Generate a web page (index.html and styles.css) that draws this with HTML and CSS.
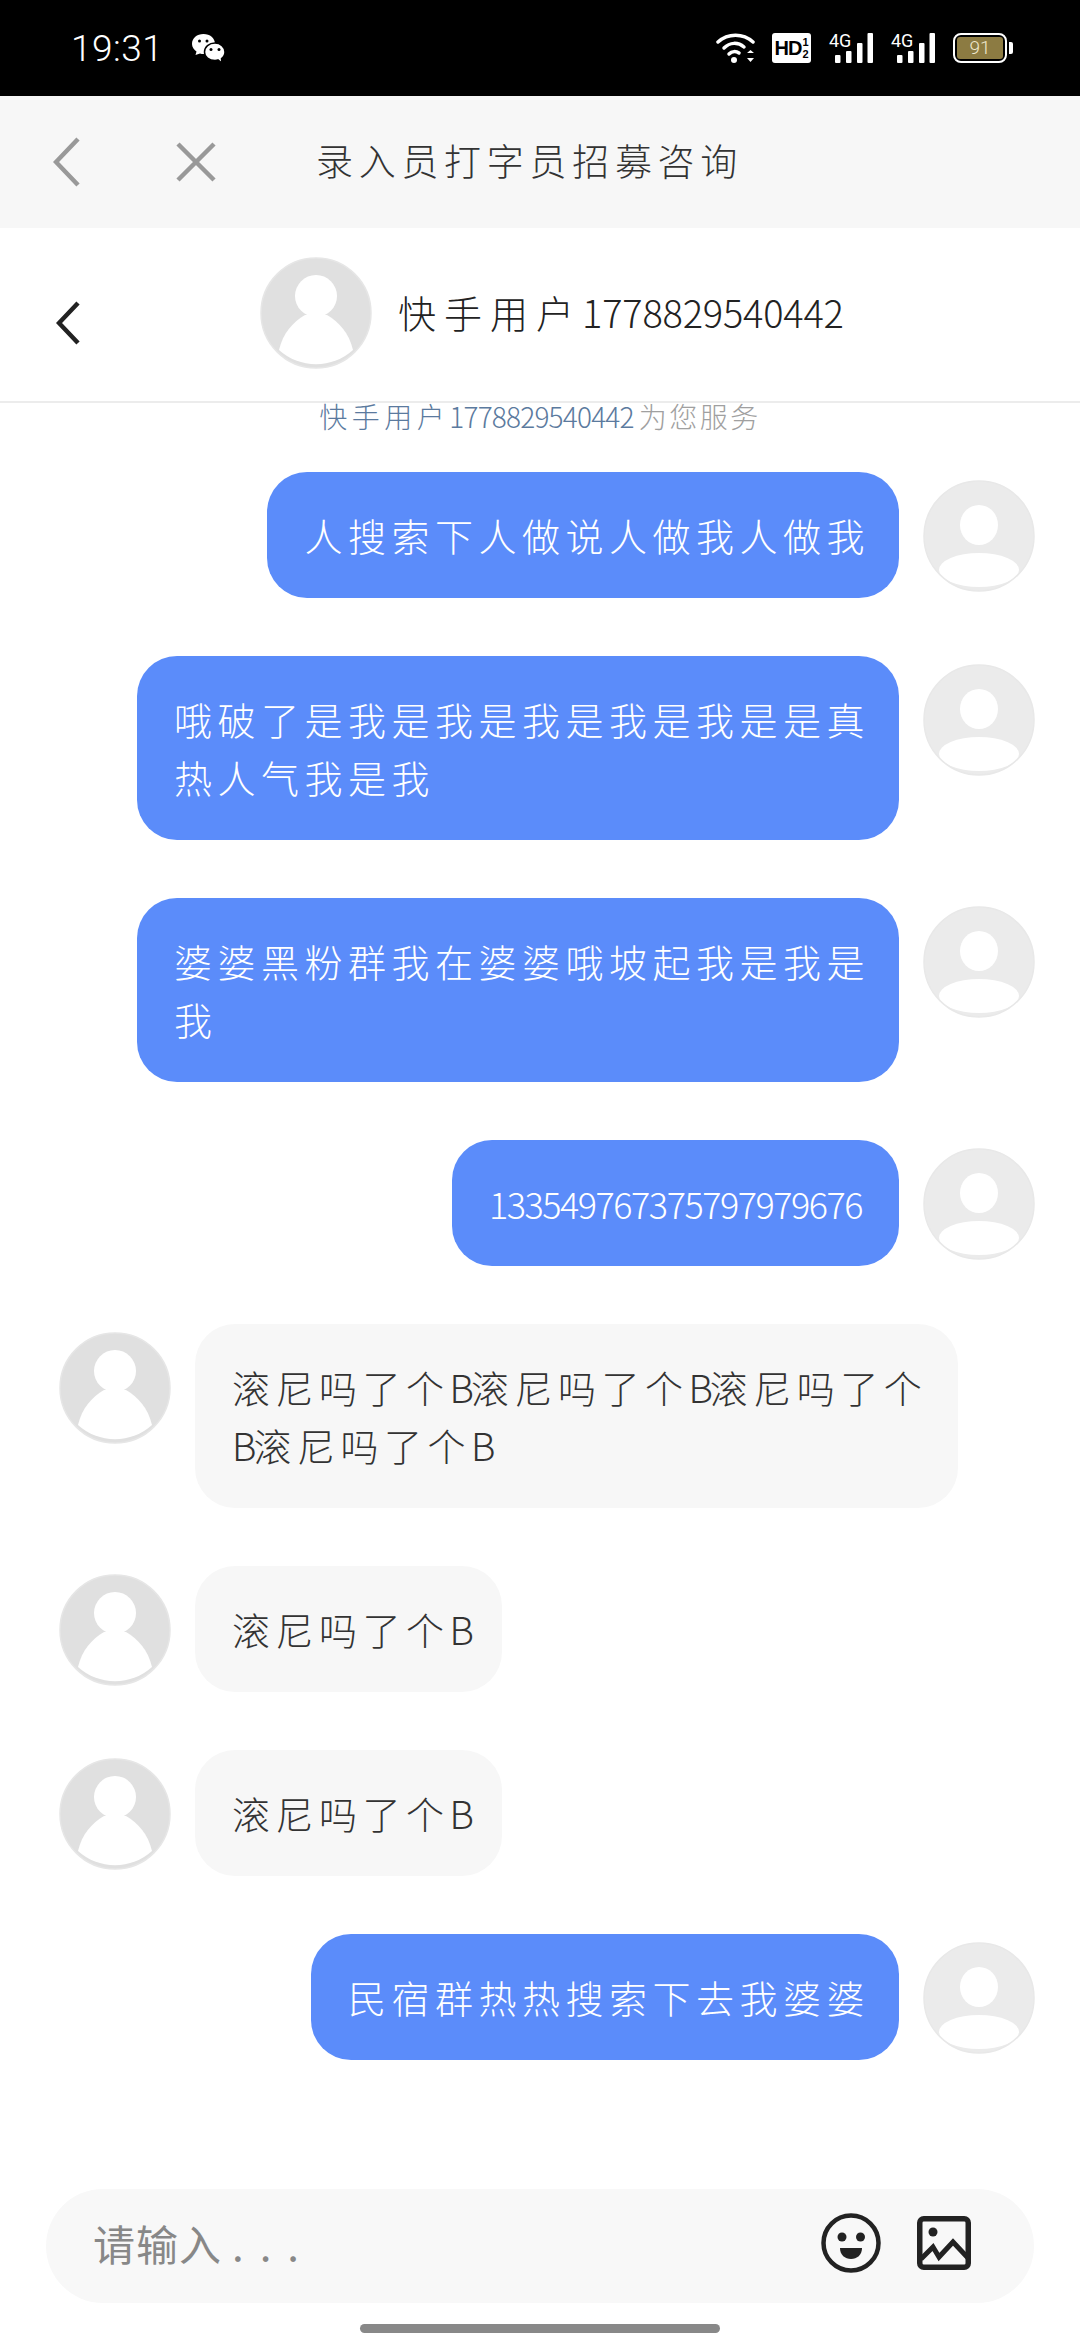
FILE: index.html
```html
<!DOCTYPE html>
<html>
<head>
  <title>录入员打字员招募咨询</title>
  <link rel="stylesheet" href="styles.css">
</head>
<body>
  <svg class="defs">
    <symbol id="avatarLeft" viewBox="0 0 112 112">
      <circle cx="56" cy="56" r="55" fill="#e0e0e0"/>
      <circle cx="56" cy="39" r="21" fill="#fff"/>
      <path d="M19 93C23 76 33 65 45 58L67 58C79 65 89 76 93 93A55 55 0 0 1 19 93Z" fill="#fff"/>
      <circle cx="56" cy="56" r="55" fill="none" stroke="#e6e6e6" stroke-width="1.5"/>
    </symbol>
    <symbol id="avatarRight" viewBox="0 0 112 112">
      <circle cx="56" cy="56" r="55" fill="#ebebeb"/>
      <ellipse cx="56" cy="45" rx="19" ry="20" fill="#fff"/>
      <ellipse cx="56" cy="90" rx="40" ry="17" fill="#fff"/>
      <circle cx="56" cy="56" r="55" fill="none" stroke="#e8e8e8" stroke-width="1.5"/>
    </symbol>
    <symbol id="signal" viewBox="0 0 44 30">
      <rect x="6" y="22" width="5.500" height="8" rx="1" fill="#fff"/>
      <rect x="17" y="18" width="5.500" height="12" rx="1" fill="#fff"/>
      <rect x="28" y="10" width="5.500" height="20" rx="1" fill="#fff"/>
      <rect x="38.500" y="0" width="5.500" height="30" rx="1" fill="#fff"/>
    </symbol>
  </svg>

  <div class="status-bar">
    <span class="time">19:31</span>
    <svg class="wechat" viewBox="0 0 33 29">
      <path d="M11.500 0C5 0 0 4 0 10C0 13 2 16 4.500 17.500L3.500 21L8 19.500C9 20 10.500 20 11.500 20C18 20 23 15 23 10C23 4 18 0 11.500 0Z" fill="#fff"/>
      <path d="M23 9C17 9 12.500 13 12.500 18C12.500 23 17 26.500 23 26.500C24 26.500 25 26.500 26 26L30 29L29.500 24.500C31.500 23 33 20.500 33 18C33 13 28.500 9 23 9Z" fill="#fff" stroke="#000" stroke-width="1.5"/>
      <circle cx="7.500" cy="7" r="1.500" fill="#000"/>
      <circle cx="15" cy="7" r="1.500" fill="#000"/>
      <circle cx="19" cy="15.500" r="1.500" fill="#000"/>
      <circle cx="27" cy="15.500" r="1.500" fill="#000"/>
    </svg>
    <div class="status-right">
      <svg class="wifi" viewBox="0 0 39 30">
        <path d="M2 9C12 0 27 0 37 9" fill="none" stroke="#fff" stroke-width="3.500" stroke-linecap="round"/>
        <path d="M8 15C14 9 22 9 28 14" fill="none" stroke="#fff" stroke-width="3.500" stroke-linecap="round"/>
        <path d="M13 21C16 18 20 18 23 20" fill="none" stroke="#fff" stroke-width="3.500" stroke-linecap="round"/>
        <circle cx="18" cy="27" r="3" fill="#fff"/>
        <path d="M31 20L34.500 17L38 20ZM31 25L34.500 29L38 25Z" fill="#fff"/>
      </svg>
      <div class="hd"><span class="hd-main">HD</span><span class="hd-frac">1<br>2</span></div>
      <div class="net"><span class="net-label">4G</span><svg class="net-bars"><use href="#signal"/></svg></div>
      <div class="net"><span class="net-label">4G</span><svg class="net-bars"><use href="#signal"/></svg></div>
      <div class="battery"><div class="battery-body"><span class="battery-fill">91</span></div><div class="battery-tip"></div></div>
    </div>
  </div>

  <div class="nav-bar">
    <svg class="nav-back" viewBox="0 0 27 50"><path d="M25 2L3 25L25 48" fill="none" stroke="#999" stroke-width="4.500"/></svg>
    <svg class="nav-close" viewBox="0 0 40 40"><path d="M2 2L38 38M38 2L2 38" fill="none" stroke="#999" stroke-width="4.500"/></svg>
    <div class="nav-title">录入员打字员招募咨询</div>
  </div>

  <div class="chat-header">
    <svg class="chat-back" viewBox="0 0 24 44"><path d="M22 2L3 22L22 42" fill="none" stroke="#222" stroke-width="4.500"/></svg>
    <svg class="avatar"><use href="#avatarLeft"/></svg>
    <div class="chat-name"><span class="han">快手用户</span>1778829540442</div>
  </div>

  <div class="service-note"><span class="note-name"><span class="han">快手用户</span>1778829540442</span><span class="note-rest">为您服务</span></div>

  <div class="messages">
    <div class="row row-me">
      <div class="bubble bubble-me">人搜索下人做说人做我人做我</div>
      <svg class="avatar"><use href="#avatarRight"/></svg>
    </div>
    <div class="row row-me">
      <div class="bubble bubble-me">哦破了是我是我是我是我是我是是真<br>热人气我是我</div>
      <svg class="avatar"><use href="#avatarRight"/></svg>
    </div>
    <div class="row row-me">
      <div class="bubble bubble-me">婆婆黑粉群我在婆婆哦坡起我是我是<br>我</div>
      <svg class="avatar"><use href="#avatarRight"/></svg>
    </div>
    <div class="row row-me">
      <div class="bubble bubble-me bubble-num">133549767375797979676</div>
      <svg class="avatar"><use href="#avatarRight"/></svg>
    </div>
    <div class="row">
      <svg class="avatar"><use href="#avatarLeft"/></svg>
      <div class="bubble bubble-other">滚尼吗了个<span class="lat">B</span>滚尼吗了个<span class="lat">B</span>滚尼吗了个<br><span class="lat">B</span>滚尼吗了个<span class="lat">B</span></div>
    </div>
    <div class="row">
      <svg class="avatar"><use href="#avatarLeft"/></svg>
      <div class="bubble bubble-other">滚尼吗了个<span class="lat">B</span></div>
    </div>
    <div class="row">
      <svg class="avatar"><use href="#avatarLeft"/></svg>
      <div class="bubble bubble-other">滚尼吗了个<span class="lat">B</span></div>
    </div>
    <div class="row row-me">
      <div class="bubble bubble-me">民宿群热热搜索下去我婆婆</div>
      <svg class="avatar"><use href="#avatarRight"/></svg>
    </div>
  </div>

  <div class="input-bar">
    <span class="placeholder">请输入<span class="dots">...</span></span>
    <svg class="smile" viewBox="0 0 60 60">
      <circle cx="30" cy="30" r="27.500" fill="none" stroke="#222" stroke-width="4.500"/>
      <circle cx="21" cy="24" r="4.500" fill="#222"/>
      <circle cx="39.500" cy="24" r="4.500" fill="#222"/>
      <path d="M19 35H41C41 42 36 46 30 46C24 46 19 42 19 35Z" fill="#222"/>
    </svg>
    <svg class="picture" viewBox="0 0 54 54">
      <rect x="2.750" y="2.750" width="48.500" height="48.500" rx="4" fill="none" stroke="#222" stroke-width="5.500"/>
      <circle cx="16" cy="16" r="4.500" fill="#222"/>
      <path d="M4 43L16 31L22 41L36 26L51 42" fill="none" stroke="#222" stroke-width="5"/>
    </svg>
  </div>
  <div class="home-indicator"></div>
</body>
</html>
```
FILE: styles.css
```css
* {
  box-sizing: border-box;
}
body {
  margin: 0;
  width: 1080px;
  height: 2340px;
  background-color: white;
  font-family: "Noto Sans CJK SC", "Noto Sans", sans-serif;
  font-weight: 300;
  display: flex;
  flex-direction: column;
  overflow: hidden;
}
.defs {
  display: none;
}

/* status bar */
.status-bar {
  height: 96px;
  background-color: #000;
  color: white;
  display: flex;
  align-items: center;
  padding: 0 67px 0 71px;
  flex-shrink: 0;
}
.time {
  font-family: Roboto, sans-serif;
  font-size: 37px;
  font-weight: 300;
  letter-spacing: 0.5px;
}
.wechat {
  width: 33px;
  height: 29px;
  margin-left: 29px;
  margin-top: 1px;
}
.status-right {
  margin-left: auto;
  display: flex;
  align-items: center;
  height: 30px;
}
.wifi {
  width: 39px;
  height: 30px;
}
.hd {
  width: 39px;
  height: 30px;
  margin-left: 17px;
  background-color: white;
  border-radius: 3px;
  color: black;
  font-family: "Liberation Sans", sans-serif;
  font-weight: bold;
  display: flex;
  align-items: center;
  justify-content: center;
}
.hd-main {
  font-size: 20px;
  letter-spacing: -1px;
}
.hd-frac {
  font-size: 11px;
  line-height: 12px;
  margin-left: 1px;
  text-align: center;
}
.net {
  position: relative;
  width: 44px;
  height: 30px;
  margin-left: 18px;
}
.net-label {
  position: absolute;
  left: 0;
  top: -2px;
  font-family: Roboto, sans-serif;
  font-size: 18px;
  line-height: 20px;
  font-weight: 400;
  color: white;
}
.net-bars {
  width: 44px;
  height: 30px;
  display: block;
}
.battery {
  display: flex;
  align-items: center;
  margin-left: 18px;
}
.battery-body {
  width: 54px;
  height: 30px;
  border: 2.500px solid white;
  border-radius: 8px;
  padding: 2px;
}
.battery-fill {
  display: block;
  width: 100%;
  height: 100%;
  background-color: #8c7b42;
  border-radius: 3px;
  color: #efe8cd;
  font-family: Roboto, sans-serif;
  font-size: 19px;
  font-weight: 300;
  line-height: 21px;
  text-align: center;
}
.battery-tip {
  width: 4px;
  height: 12px;
  margin-left: 2px;
  background-color: white;
  border-radius: 0 2px 2px 0;
}

/* browser nav */
.nav-bar {
  height: 132px;
  background-color: #f7f7f7;
  display: flex;
  align-items: center;
  padding-left: 53px;
  flex-shrink: 0;
}
.nav-back {
  width: 27px;
  height: 50px;
}
.nav-close {
  width: 40px;
  height: 40px;
  margin-left: 96px;
}
.nav-title {
  margin-left: 100px;
  margin-top: -4px;
  font-size: 37px;
  letter-spacing: 5.7px;
  color: #333;
}

/* chat header */
.chat-header {
  height: 175px;
  border-bottom: 2px solid #ececec;
  display: flex;
  align-items: center;
  padding: 0 0 0 56px;
  flex-shrink: 0;
}
.chat-back {
  width: 24px;
  height: 44px;
  margin-top: 16px;
}
.chat-name {
  margin-left: 26px;
  margin-top: -6px;
  font-size: 38px;
  letter-spacing: -0.2px;
  color: #222;
}
.chat-name .han {
  letter-spacing: 8px;
}
.service-note {
  height: 26px;
  font-size: 28px;
  line-height: 26px;
  text-align: center;
  white-space: nowrap;
}
.note-name {
  color: #5b7a9e;
  letter-spacing: -0.8px;
}
.note-name .han {
  letter-spacing: 4.5px;
}
.note-rest {
  color: #a0a0a0;
  margin-left: 5px;
  letter-spacing: 2.5px;
}

/* messages */
.messages {
  flex: 1;
  padding: 43px 45px 0 59px;
  display: flex;
  flex-direction: column;
  gap: 58px;
}
.row {
  display: flex;
  align-items: flex-start;
  gap: 24px;
}
.row-me {
  justify-content: flex-end;
}
.avatar {
  width: 112px;
  height: 112px;
  margin-top: 8px;
  flex-shrink: 0;
}
.chat-header .avatar {
  margin-left: 180px;
  margin-top: -3px;
}
.bubble {
  border-radius: 40px;
  padding: 34px 29px 34px 37px;
  font-size: 38px;
  line-height: 58px;
  letter-spacing: 5.5px;
  white-space: nowrap;
}
.bubble-me {
  background-color: #5b8cfa;
  color: white;
}
.bubble-other {
  background-color: #f7f7f7;
  color: #333;
  padding-right: 31px;
}
.bubble-num {
  padding-right: 37px;
  font-size: 36px;
  letter-spacing: -1.5px;
}
.lat {
  letter-spacing: -3px;
}

/* input */
.input-bar {
  margin: 0 46px;
  height: 114px;
  border-radius: 57px;
  background-color: #f8f8f8;
  display: flex;
  align-items: center;
  padding: 0 63px 0 47px;
  flex-shrink: 0;
}
.placeholder {
  font-size: 42px;
  font-weight: 400;
  letter-spacing: 1px;
  color: #888;
  margin-right: auto;
  margin-top: -8px;
}
.dots {
  letter-spacing: 16px;
  margin-left: 10px;
}
.smile {
  width: 60px;
  height: 60px;
  margin-top: -6px;
}
.picture {
  width: 54px;
  height: 54px;
  margin-left: 36px;
  margin-top: -6px;
}
.home-indicator {
  width: 360px;
  height: 9px;
  margin: 21px auto 7px;
  background-color: #888;
  border-radius: 5px;
  flex-shrink: 0;
}
```
